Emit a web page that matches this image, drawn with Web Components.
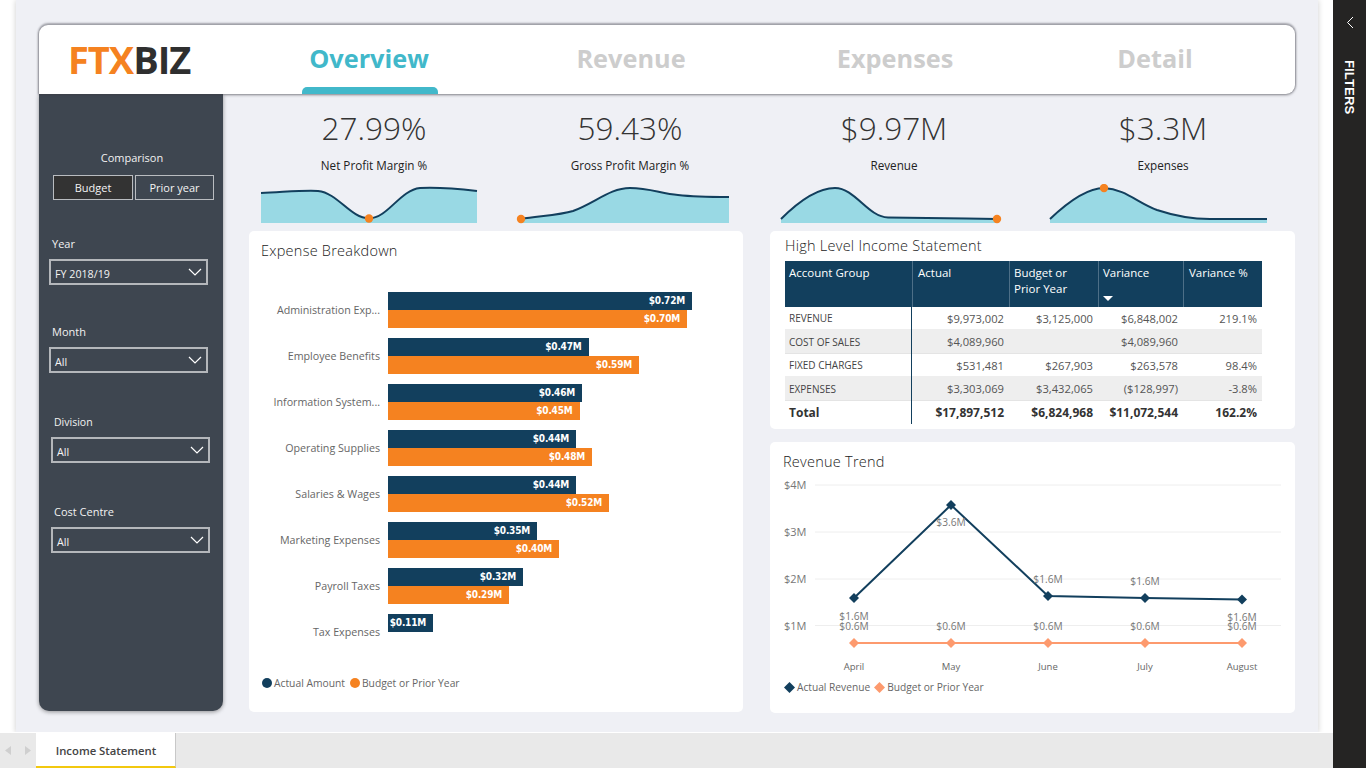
<!DOCTYPE html>
<html lang="en"><head><meta charset="utf-8"><title>FTXBIZ Income Statement</title>
<style>
html,body{margin:0;padding:0;height:100%;overflow:hidden;background:#fff}
body{font-family:"Open Sans","Noto Sans",sans-serif;color:#333}
</style></head><body>
<report-app>
  <report-header></report-header>
  <div slot="side">
    <filter-panel></filter-panel>
  </div>
  <div slot="kpis">
    <kpi-card value="27.99%" label="Net Profit Margin %" view="249 184 250 42"
      line="M261 193C285 192 305 190 318 191C338 193 350 218 369 218.5C388 218 400 190 420 188C440 187 460 189 477 191"
      area="L477 223L261 223Z" dotx="369" doty="218.5"></kpi-card>
    <kpi-card value="59.43%" label="Gross Profit Margin %" view="499 184 262 42"
      line="M521 219C540 216 560 215 573 211C595 203 610 188 630 188C650 188 662 194 678 195C695 197 715 197 729 197"
      area="L729 223L521 223Z" dotx="521" doty="219"></kpi-card>
    <kpi-card value="$9.97M" label="Revenue" view="761 184 266 42"
      line="M781 219C800 200 818 188 835 188C855 188 868 217 888 217.5C920 218 960 218.500 997 219"
      area="L997 223L781 223Z" dotx="997" doty="219"></kpi-card>
    <kpi-card value="$3.3M" label="Expenses" view="1027 184 272 42"
      line="M1050 219C1070 200 1088 188 1104 188C1125 189 1138 203 1157 210C1175 216 1190 219 1210 219C1235 219 1250 219 1267 219"
      area="L1267 223L1050 223Z" dotx="1104" doty="188"></kpi-card>
  </div>
  <expense-chart slot="expense"></expense-chart>
  <income-table slot="income"></income-table>
  <revenue-chart slot="revenue"></revenue-chart>
</report-app>
<script>
function shell(host, html){ host.attachShadow({mode:'open'}).innerHTML = html; }

customElements.define('report-app', class extends HTMLElement{
  connectedCallback(){ shell(this, `<style>
    :host{display:grid;grid-template-columns:1fr 33px;grid-template-rows:733px 35px;width:1366px;height:768px;overflow:hidden}
    .outer{background:#fff;padding:0 15px 0 16px;min-width:0}
    .canvas{height:733px;box-sizing:border-box;background:#eff0f5;padding:25px 23px 0;box-shadow:0 0 6px rgba(0,0,0,.2)}
    .body{display:flex;gap:26px}
    .main{width:1046px;display:flex;flex-direction:column}
    .kpis ::slotted(div){display:grid;grid-template-columns:250px 262px 266px 272px;width:1050px}
    .cards{display:grid;grid-template-columns:494px 525px;grid-template-rows:198px 271px;column-gap:27px;row-gap:13px;margin-top:5px;height:482px}
    .expense{grid-row:1 / span 2;display:grid}
    .side{display:block}
    filter-pane{grid-row:1 / span 2;grid-column:2}
    page-tabs{grid-column:1}
  </style>
  <div class="outer"><div class="canvas">
    <slot></slot>
    <div class="body">
      <div class="side"><slot name="side"></slot></div>
      <div class="main">
        <div class="kpis"><slot name="kpis"></slot></div>
        <div class="cards">
          <div class="expense"><slot name="expense"></slot></div>
          <slot name="income"></slot>
          <slot name="revenue"></slot>
        </div>
      </div>
    </div>
  </div></div>
  <filter-pane></filter-pane>
  <page-tabs></page-tabs>`); }
});

customElements.define('report-header', class extends HTMLElement{
  connectedCallback(){ shell(this, `<style>
    :host{display:grid;grid-template-columns:199px 262px 262px 266px 254px;height:69px;width:1256px;box-sizing:border-box;background:#fff;
      border-radius:9px 9px 9px 0;box-shadow:0 -1px 2px 1px rgba(60,60,70,.4),0 1px 3px rgba(60,60,70,.55);position:relative;z-index:1}
    .logo{font:700 38px/1 "Open Sans",sans-serif;letter-spacing:-1px;padding:15px 0 0 29px;color:#f58220;white-space:nowrap}
    .logo b{color:#2f2f2f;font-weight:700}
    .tab{font:700 25.300px/1 "Open Sans",sans-serif;text-align:center;color:#cdcdcd;padding-top:21px;position:relative}
    .tab.on{color:#41b8ca}
    .tab.on::after{content:"";position:absolute;left:64px;width:136px;height:7px;bottom:0;background:#41b8ca;border-radius:5px 5px 0 0}
  </style>
  <div class="logo">FTX<b>BIZ</b></div>
  <div class="tab on">Overview</div><div class="tab">Revenue</div><div class="tab">Expenses</div><div class="tab">Detail</div>`); }
});

customElements.define('filter-slicer', class extends HTMLElement{
  connectedCallback(){ shell(this, `<style>
    :host{display:block;width:159px;color:#fff}
    .l{font:11px/16px "Open Sans",sans-serif;color:#f2f2f2;padding-left:3px;height:16px}
    :host(.small) .l{font-size:10.500px}
    .d{box-sizing:border-box;height:26px;margin-top:7px;border:2px solid #b4b7bb;display:flex;align-items:center;justify-content:space-between;padding:0 4px 0 4px;font:10.700px "Open Sans",sans-serif;color:#f4f4f4}
    .d span{padding-top:3px}
    svg{display:block}
  </style>
  <div class="l">${this.getAttribute('label')}</div>
  <div class="d"><span>${this.getAttribute('value')}</span>
  <svg width="14" height="8" viewBox="0 0 14 8"><path d="M1 1L7 7L13 1" fill="none" stroke="#fff" stroke-width="1.200"/></svg></div>`); }
});

customElements.define('filter-panel', class extends HTMLElement{
  connectedCallback(){ shell(this, `<style>
    :host{display:block;width:184px;height:617px;box-sizing:border-box;background:#3e4650;border-radius:0 0 10px 10px;box-shadow:0 1px 4px rgba(0,0,0,.4);padding-top:56px;color:#fff}
    .c{text-align:center;font:11px/16px "Open Sans",sans-serif;color:#f2f2f2;width:186px}
    .btns{display:flex;gap:2px;margin:9px 0 0 14px}
    .btns div{box-sizing:border-box;height:25px;border:1px solid #b9bcc0;font:11px/23px "Open Sans",sans-serif;text-align:center;color:#f4f4f4}
    .b1{width:80px;background:#333}.b2{width:79px}
    filter-slicer{margin-left:10px}
    .y{margin-top:36px}.m{margin-top:39px}.v{margin-top:41px;margin-left:12px}.o{margin-top:41px;margin-left:12px}
  </style>
  <div class="c">Comparison</div>
  <div class="btns"><div class="b1">Budget</div><div class="b2">Prior year</div></div>
  <filter-slicer class="y" label="Year" value="FY 2018/19"></filter-slicer>
  <filter-slicer class="m" label="Month" value="All"></filter-slicer>
  <filter-slicer class="v small" label="Division" value="All"></filter-slicer>
  <filter-slicer class="o" label="Cost Centre" value="All"></filter-slicer>`); }
});

customElements.define('kpi-card', class extends HTMLElement{
  connectedCallback(){
    const a=n=>this.getAttribute(n), [,,w,h]=a('view').split(' ');
    shell(this, `<style>
    :host{display:block;text-align:center}
    .v{font:300 31.500px/40px "Open Sans",sans-serif;color:#333;margin-top:14px}
    .l{font:11.700px/16px "Open Sans",sans-serif;color:#222;margin-top:9px}
    svg{display:block;margin-top:11px}
  </style>
  <div class="v">${a('value')}</div><div class="l">${a('label')}</div>
  <svg width="${w}" height="${h}" viewBox="${a('view')}">
    <path d="${a('line')}${a('area')}" fill="#99d9e4"/>
    <path d="${a('line')}" fill="none" stroke="#123f5d" stroke-width="2"/>
    <circle cx="${a('dotx')}" cy="${a('doty')}" r="4.200" fill="#f58220"/>
  </svg>`); }
});

customElements.define('expense-chart', class extends HTMLElement{
  connectedCallback(){
    const d=[["Administration Exp...",304,"$0.72M",299,"$0.70M"],["Employee Benefits",200.500,"$0.47M",251,"$0.59M"],["Information System...",194,"$0.46M",191.500,"$0.45M"],["Operating Supplies",188,"$0.44M",204,"$0.48M"],["Salaries & Wages",188,"$0.44M",221,"$0.52M"],["Marketing Expenses",149,"$0.35M",171,"$0.40M"],["Payroll Taxes",135,"$0.32M",121,"$0.29M"],["Tax Expenses",45,"$0.11M",0,""]];
    const rows=d.map(r=>`<div class="row"><div class="name">${r[0].replace('&','&amp;')}</div><div class="bars">
      <div class="bar n" style="width:${r[1]}px">${r[2]}</div>${r[3]?`<div class="bar o" style="width:${r[3]}px">${r[4]}</div>`:''}</div></div>`).join('');
    shell(this, `<style>
    :host{display:block;background:#fff;border-radius:5px;box-sizing:border-box;padding:10px 0 0 12px;height:481px}
    .t{font:300 14.500px/20px "Open Sans",sans-serif;color:#222;letter-spacing:.25px}
    .chart{margin-top:31px;display:flex;flex-direction:column;gap:10px}
    .row{display:grid;grid-template-columns:119px 1fr;column-gap:8px;height:36px;align-items:center}
    .name{text-align:right;font:10.700px "Open Sans",sans-serif;color:#666;white-space:nowrap}
    .bars{display:flex;flex-direction:column;height:36px}
    .bar{height:18px;box-sizing:border-box;text-align:right;padding-right:7px;color:#fff;font:700 10px/18px "DejaVu Sans Condensed","Roboto",sans-serif;letter-spacing:-.2px;flex:none}
    .n{background:#123f5d}.o{background:#f58220}
    .lg{display:flex;align-items:center;font:10.300px/14px "Open Sans",sans-serif;color:#666;margin-top:26px}
    .lg i{width:10px;height:10px;border-radius:50%;margin-right:2px;margin-left:1px}
    .lg span{margin-right:4px}
  </style>
  <div class="t">Expense Breakdown</div>
  <div class="chart">${rows}</div>
  <div class="lg"><i style="background:#123f5d"></i><span>Actual Amount</span><i style="background:#f58220"></i><span>Budget or Prior Year</span></div>`); }
});

customElements.define('income-table', class extends HTMLElement{
  connectedCallback(){
    const r=[["REVENUE","$9,973,002","$3,125,000","$6,848,002","219.1%",23],["COST OF SALES","$4,089,960","","$4,089,960","",24],["FIXED CHARGES","$531,481","$267,903","$263,578","98.4%",23],["EXPENSES","$3,303,069","$3,432,065","($128,997)","-3.8%",24],["Total","$17,897,512","$6,824,968","$11,072,544","162.2%",23]];
    const rows=r.map((x,i)=>`<div class="r ${i%2?'alt':''} ${i==4?'tot':''}" style="height:${x[5]}px;line-height:${x[5]}px"><div class="c0">${x[0]}</div>${x.slice(1,5).map(v=>`<div class="num">${v}</div>`).join('')}</div>`).join('');
    shell(this, `<style>
    :host{display:block;background:#fff;border-radius:5px;box-sizing:border-box;padding:5px 0 0 15px;height:198px}
    .t{font:300 14.500px/20px "Open Sans",sans-serif;color:#222;letter-spacing:.25px;height:25px}
    .r,.h{display:grid;grid-template-columns:127px 97px 89px 85px 79px;width:477px}
    .h{background:#123f5d;height:46px;color:#fff;font:11.500px/16px "Open Sans",sans-serif}
    .h div{padding:4px 4px 0;border-left:1px solid #4d6f87;box-sizing:border-box;position:relative}
    .h div:first-child{border-left:0}
    .h div:nth-child(2),.h div:nth-child(5){padding-left:5px}
    .h svg{position:absolute;left:4px;top:35px}
    .r{font-family:"Open Sans",sans-serif;font-size:11.200px;color:#555;box-sizing:border-box;border-bottom:1px solid #eee}
    .alt{background:#eee;border-bottom-color:#e4e4e4}
    .c0{padding-left:4px;font-size:10px;color:#444;border-right:1px solid #123f5d;box-sizing:border-box}
    .num{text-align:right;padding-right:5px;}
    .tot{font-weight:700;font-size:12px;color:#333;border-bottom:0}
    .tot .c0{font-size:12px;color:#333}
  </style>
  <div class="t">High Level Income Statement</div>
  <div class="h"><div>Account Group</div><div>Actual</div><div>Budget or Prior Year</div><div>Variance<svg width="10" height="5" viewBox="0 0 10 5"><path d="M0 0H10L5 5Z" fill="#fff"/></svg></div><div>Variance %</div></div>
  ${rows}`); }
});

customElements.define('revenue-chart', class extends HTMLElement{
  connectedCallback(){
    const xs=[854,951,1048,1145,1242], ya=[598,505,596,598,599.500], m=["April","May","June","July","August"];
    const gy=[[485,"$4M"],[532,"$3M"],[579,"$2M"],[625.500,"$1M"]];
    const lab=[[854,620],[951,526],[1048,583],[1145,585],[1242,621]];
    const dia=(x,y,c,s)=>`<path d="M${x} ${y-s}L${x+s} ${y}L${x} ${y+s}L${x-s} ${y}Z" fill="${c}"/>`;
    shell(this, `<style>
    :host{display:block;background:#fff;border-radius:5px;height:271px;box-sizing:border-box;padding:10px 0 0 13px}
    .t{font:300 14.500px/20px "Open Sans",sans-serif;color:#222;letter-spacing:.25px;height:20px}
    .c{display:block;margin-left:-13px}
    text{font:10.200px "Open Sans",sans-serif;fill:#777}
    .ax{font-size:11px}.mo{font-size:9.500px;fill:#666}
    .lg{display:flex;align-items:center;font:10.200px/14px "Open Sans",sans-serif;color:#666;margin:4px 0 0 1px}
    .lg svg{margin:0 2px 0 0}
    .lg span{margin-right:4px}
  </style>
  <div class="t">Revenue Trend</div>
  <svg class="c" width="525" height="204" viewBox="770 472 525 204">
    ${gy.map(g=>`<line x1="815" x2="1281" y1="${g[0]}" y2="${g[0]}" stroke="#eee" stroke-width="1"/><text class="ax" x="784" y="${g[0]+4}">${g[1]}</text>`).join('')}
    <polyline points="${xs.map((x,i)=>x+','+ya[i]).join(' ')}" fill="none" stroke="#123f5d" stroke-width="2"/>
    <line x1="854" x2="1242" y1="643" y2="643" stroke="#fd9a6e" stroke-width="2"/>
    ${xs.map((x,i)=>dia(x,ya[i],'#123f5d',5)+dia(x,643,'#fd9a6e',5)).join('')}
    ${lab.map((l,i)=>`<text x="${l[0]}" y="${l[1]}" text-anchor="middle">${i==1?'$3.6M':'$1.6M'}</text>`).join('')}
    ${xs.map(x=>`<text x="${x}" y="630" text-anchor="middle">$0.6M</text>`).join('')}
    ${xs.map((x,i)=>`<text class="mo" x="${x}" y="670" text-anchor="middle">${m[i]}</text>`).join('')}
  </svg>
  <div class="lg"><svg width="11" height="11" viewBox="0 0 11 11"><path d="M5.500 0L11 5.500L5.500 11L0 5.500Z" fill="#123f5d"/></svg><span>Actual Revenue</span><svg width="11" height="11" viewBox="0 0 11 11"><path d="M5.500 0L11 5.500L5.500 11L0 5.500Z" fill="#fd9a6e"/></svg><span>Budget or Prior Year</span></div>`); }
});

customElements.define('filter-pane', class extends HTMLElement{
  connectedCallback(){ shell(this, `<style>
    :host{display:block;background:#252423;color:#fff;position:relative;z-index:2;height:768px}
    svg{display:block;margin:16px 0 0 13px}
    .f{writing-mode:vertical-rl;font:700 13px/16px "Liberation Sans",sans-serif;letter-spacing:.15px;margin:31px 0 0 8px}
  </style>
  <svg width="8" height="13" viewBox="0 0 8 13"><path d="M7 1L1.500 6.500L7 12" fill="none" stroke="#fff" stroke-width="1"/></svg>
  <div class="f">FILTERS</div>`); }
});

customElements.define('page-tabs', class extends HTMLElement{
  connectedCallback(){ shell(this, `<style>
    :host{display:flex;background:#e9e9e9;height:35px;box-shadow:0 -1px 0 #fff}
    .nav{width:36px;display:flex;align-items:center;gap:14px;padding-left:5px;box-sizing:border-box}
    .tab{box-sizing:border-box;width:140px;height:35px;background:#fff;border-right:1px solid #c8c8c8;border-bottom:2px solid #f2c80f;padding-left:1px;text-align:center;font:600 11.300px/35px "Open Sans",sans-serif;color:#444}
  </style>
  <div class="nav"><svg width="6" height="9" viewBox="0 0 6 9"><path d="M6 0V9L0 4.500Z" fill="#cfcfcf"/></svg><svg width="6" height="9" viewBox="0 0 6 9"><path d="M0 0V9L6 4.500Z" fill="#cfcfcf"/></svg></div>
  <div class="tab">Income Statement</div>`); }
});
</script>
</body></html>
